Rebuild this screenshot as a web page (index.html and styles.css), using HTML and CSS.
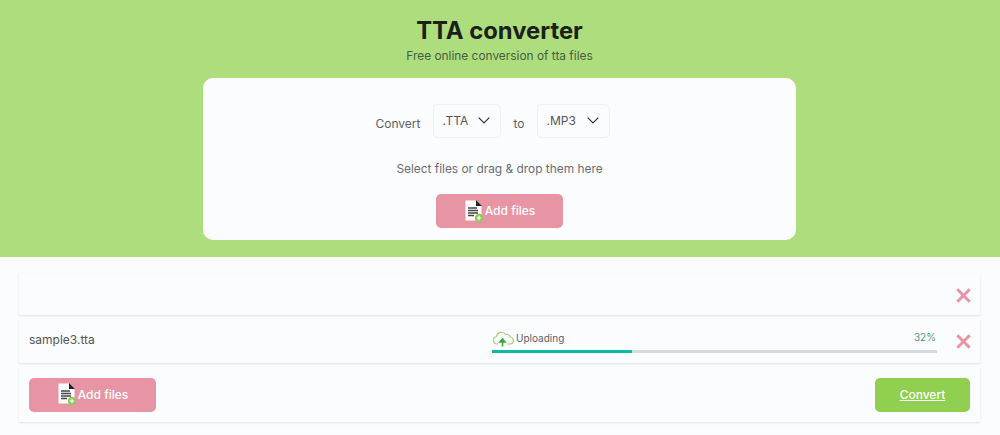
FILE: index.html
```html
<!DOCTYPE html>
<html lang="en">
<head>
    <meta charset="UTF-8">
    <meta name="viewport" content="width=device-width, initial-scale=1.0">
    <title>TTA converter</title>
    <link rel="stylesheet" href="styles.css">
</head>
<body>
    <svg class="defs" width="0" height="0">
        <symbol id="file-add" viewBox="0 0 20 24">
            <path d="M1.500 1.500h11l5 5v15h-16z" fill="#fff"/>
            <path d="M12 1l6 6h-6z" fill="#222"/>
            <path d="M4 9h9M4 11.500h10M4 14h10M4 16.500h6" stroke="#444" stroke-width="1.300"/>
            <circle cx="15" cy="19" r="4.200" fill="#8ccb55"/>
            <path d="M15 16.800v4.400M12.800 19h4.400" stroke="#fff" stroke-width="1.200"/>
        </symbol>
        <symbol id="cross" viewBox="0 0 14 14">
            <path d="M1.200 1.200l11.600 11.600M12.800 1.200L1.200 12.800" fill="none" stroke="#e795a5" stroke-width="2.800"/>
        </symbol>
    </svg>

    <header class="hero">
        <h1>TTA converter</h1>
        <p class="subtitle">Free online conversion of tta files</p>
        <div class="panel">
            <div class="format-row">
                <span class="label-convert">Convert</span>
                <div class="select select-from">.TTA
                    <svg width="12" height="7" viewBox="0 0 12 7"><path d="M.7.700l5.300 5.300 5.300-5.300" fill="none" stroke="#333" stroke-width="1.200"/></svg>
                </div>
                <span class="label-to">to</span>
                <div class="select select-to">.MP3
                    <svg width="12" height="7" viewBox="0 0 12 7"><path d="M.7.700l5.300 5.300 5.300-5.300" fill="none" stroke="#333" stroke-width="1.200"/></svg>
                </div>
            </div>
            <p class="hint">Select files or drag &amp; drop them here</p>
            <button class="btn btn-add"><svg width="20" height="24"><use href="#file-add"/></svg>Add files</button>
        </div>
    </header>

    <main class="queue">
        <div class="row row-empty">
            <svg class="remove" width="15" height="15"><use href="#cross"/></svg>
        </div>
        <div class="row row-file">
            <span class="filename">sample3.tta</span>
            <div class="progress">
                <div class="progress-head">
                    <span class="status">
                        <svg width="22" height="17" viewBox="0 0 22 17">
                            <path d="M6 14H5a3.800 3.800 0 0 1-.6-7.500A5 5 0 0 1 13.500 4.500 3.800 3.800 0 0 1 18.200 7a3.500 3.500 0 0 1-.7 7H15" fill="none" stroke="#a5cf7c" stroke-width="1.200"/>
                            <path d="M10.500 16.500V11.500M8 12l2.500-3 2.500 3z" fill="#3fa535" stroke="#3fa535" stroke-width="1.600"/>
                        </svg>
                        Uploading
                    </span>
                    <span class="percent">32%</span>
                </div>
                <div class="bar"><div class="bar-fill" style="width: 31.500%"></div></div>
            </div>
            <svg class="remove" width="15" height="15"><use href="#cross"/></svg>
        </div>
        <div class="row row-actions">
            <button class="btn btn-add"><svg width="20" height="24"><use href="#file-add"/></svg>Add files</button>
            <button class="btn btn-convert">Convert</button>
        </div>
    </main>
</body>
</html>
```

FILE: styles.css
```css
* {
    box-sizing: border-box;
}
body {
    margin: 0;
    background-color: #fbfcfe;
    font-family: Inter, Arial, sans-serif;
    color: #444;
    height: 435px;
    overflow: hidden;
}
.defs {
    position: absolute;
}
.hero {
    height: 257px;
    padding-top: 16px;
    padding-right: 1px;
    background-color: #aedd7e;
    text-align: center;
}
h1 {
    margin: 0;
    font-size: 23.800px;
    line-height: 30px;
    font-weight: 700;
    color: #1a2118;
}
.subtitle {
    margin: 2px 0 0;
    font-size: 11.900px;
    line-height: 16px;
    color: #46603e;
}
.panel {
    width: 593px;
    height: 162px;
    margin: 14px auto 0;
    padding-top: 26px;
    background-color: #fbfcfe;
    border-radius: 10px;
}
.format-row {
    display: flex;
    justify-content: center;
    align-items: center;
    padding-right: 14px;
    font-size: 12px;
    color: #5c5f66;
}
.label-convert {
    margin-top: 4px;
    margin-right: 12px;
}
.label-to {
    margin: 4px 12px 0 13px;
}
.select {
    display: flex;
    justify-content: space-between;
    align-items: center;
    height: 34px;
    padding: 0 10px 1px 9px;
    border: 1px solid #eef0f4;
    border-radius: 5px;
    font-size: 12px;
    color: #555;
}
.select-from {
    width: 68px;
}
.select-to {
    width: 73px;
}
.hint {
    margin: 23px 0 17px;
    font-size: 11.900px;
    line-height: 16px;
    color: #6a6d73;
}
.btn {
    display: inline-flex;
    justify-content: center;
    align-items: center;
    height: 34px;
    border: none;
    border-radius: 5px;
    font-family: inherit;
    font-size: 12px;
    font-weight: 500;
    color: #fff;
    cursor: pointer;
}
.btn-add {
    width: 127px;
    padding-bottom: 2px;
    background-color: #e795a5;
}
.btn-add svg {
    margin-right: 1px;
}
.btn-convert {
    width: 95px;
    background-color: #90cf4f;
    text-decoration: underline;
}
.queue {
    padding: 16px 20px 0 19px;
    display: flex;
    flex-direction: column;
    gap: 4px;
}
.row {
    display: flex;
    align-items: center;
    background-color: #fbfcfe;
    box-shadow: 0 1px 2px #dfe2e6;
}
.row-empty {
    height: 42px;
    justify-content: flex-end;
    padding-top: 3px;
}
.row-file {
    height: 44px;
}
.row-actions {
    height: 55px;
    justify-content: space-between;
    padding: 0 10px;
}
.filename {
    width: 473px;
    padding-left: 10px;
    padding-bottom: 4px;
    font-size: 12px;
    color: #555;
}
.progress {
    width: 445px;
}
.progress-head {
    display: flex;
    justify-content: space-between;
    align-items: flex-end;
    margin-bottom: 1px;
    font-size: 10px;
}
.status {
    display: flex;
    align-items: center;
    gap: 2px;
    margin-bottom: 2px;
    color: #5c5f66;
}
.percent {
    color: #4f9a85;
    margin-bottom: 6px;
    margin-right: 1px;
}
.bar {
    height: 3px;
    background-color: #d3dae0;
}
.bar-fill {
    height: 100%;
    background-color: #0fb9a5;
}
.remove {
    margin-left: auto;
    margin-right: 9px;
}
```
